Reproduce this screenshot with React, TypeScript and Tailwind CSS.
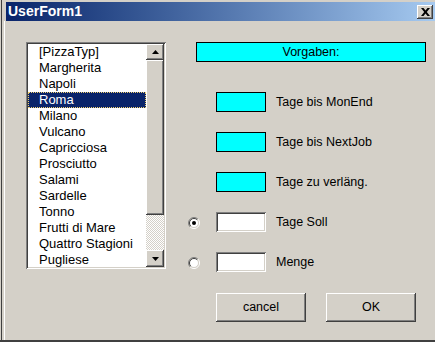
// VBA-style UserForm dialog (Win2000 look)

const pizzas = [
  '[PizzaTyp]',
  'Margherita',
  'Napoli',
  'Roma',
  'Milano',
  'Vulcano',
  'Capricciosa',
  'Prosciutto',
  'Salami',
  'Sardelle',
  'Tonno',
  'Frutti di Mare',
  'Quattro Stagioni',
  'Pugliese',
];

const raised =
  'bg-[#d4d0c8] shadow-[inset_-1px_-1px_0_#404040,inset_1px_1px_0_#ffffff,inset_-2px_-2px_0_#808080]';
const sunken =
  'shadow-[inset_1px_1px_0_#808080,inset_-1px_-1px_0_#ffffff,inset_2px_2px_0_#404040,inset_-2px_-2px_0_#d4d0c8]';

function Arrow({ down = false }: { down?: boolean }) {
  return (
    <svg width="7" height="4" viewBox="0 0 7 4">
      <polygon points={down ? '0,0 7,0 3.5,4' : '0,4 7,4 3.5,0'} fill="#000" />
    </svg>
  );
}

function Radio({ checked }: { checked?: boolean }) {
  return (
    <svg width="12" height="12" viewBox="0 0 12 12">
      <circle cx="6" cy="6" r="4.5" fill="#fff" />
      <path d="M2.1 9.9 A5.5 5.5 0 0 1 9.9 2.1" stroke="#808080" fill="none" />
      <path d="M9.9 2.1 A5.5 5.5 0 0 1 2.1 9.9" stroke="#ffffff" fill="none" />
      <path d="M2.8 9.2 A4.5 4.5 0 0 1 9.2 2.8" stroke="#404040" fill="none" />
      <path d="M9.2 2.8 A4.5 4.5 0 0 1 2.8 9.2" stroke="#d4d0c8" fill="none" />
      {checked && <circle cx="6" cy="6" r="2" fill="#000" />}
    </svg>
  );
}

function ListBox() {
  return (
    <div className={`flex h-[227px] w-[140px] bg-white p-[2px] ${sunken}`}>
      <div className="flex-1 overflow-hidden text-[13px]">
        {pizzas.map((p, i) => (
          <div
            key={p}
            className={
              i === 3
                ? 'h-[16px] border border-dotted border-[#f0d070] bg-[#0a246a] pl-[10px] leading-[14px] text-white'
                : 'h-[16px] pl-[11px] leading-[16px]'
            }
          >
            {p}
          </div>
        ))}
      </div>
      <div className="flex w-[18px] flex-col">
        <div className={`flex h-[16px] items-center justify-center ${raised}`}>
          <Arrow />
        </div>
        <div className={`h-[155px] ${raised}`} />
        <div className="flex-1 bg-[repeating-conic-gradient(#d4d0c8_0%_25%,#ffffff_0%_50%)] bg-[length:2px_2px]" />
        <div className={`flex h-[17px] items-center justify-center ${raised}`}>
          <Arrow down />
        </div>
      </div>
    </div>
  );
}

function FieldRow({
  label,
  cyan,
  radio,
}: {
  label: string;
  cyan?: boolean;
  radio?: 'on' | 'off';
}) {
  return (
    <div className="flex h-[20px] items-center">
      <div className="flex w-[28px] items-center pt-px">{radio && <Radio checked={radio === 'on'} />}</div>
      {cyan ? (
        <div className="h-[20px] w-[50px] border border-black bg-[#00ffff]" />
      ) : (
        <div className={`h-[20px] w-[50px] bg-white ${sunken}`} />
      )}
      <span className="ml-[10px]">{label}</span>
    </div>
  );
}

export default function App() {
  return (
    <div className="flex h-[342px] w-[435px] flex-col overflow-hidden bg-[#d4d0c8] font-['Liberation_Sans',Arial,sans-serif] text-[12.5px] text-black">
      <div className="flex flex-1">
        {/* window frame */}
        <div className="w-px" />
        <div className="w-px bg-[#404040]" />
        <div className="w-[2px]" />

        <div className="flex flex-1 flex-col">
          <div className="h-[2px]" />
          <div className="ml-[2px] flex h-[19px] items-center justify-between bg-linear-to-r from-[#0a246a] to-[#a6caf0]">
            <span className="pl-[2px] text-[14px] font-bold text-white">UserForm1</span>
            <div className={`mr-[2px] flex h-[14px] w-[16px] items-center justify-center ${raised}`}>
              <svg width="9" height="8" viewBox="0 0 9 8">
                <path d="M0 0h2.5l2 2.6L6.5 0H9L5.8 4 9 8H6.5l-2-2.6L2.5 8H0l3.2-4z" fill="#000" />
              </svg>
            </div>
          </div>

          <div className="flex flex-1 items-start border-l border-white pl-[21px] pt-[21px]">
            <ListBox />

            <div className="ml-[22px] flex flex-col">
              <div className="ml-[8px] flex h-[20px] w-[230px] items-center justify-center border border-black bg-[#00ffff]">
                Vorgaben:
              </div>

              <div className="mt-[30px] flex flex-col gap-[20px]">
                <FieldRow label="Tage bis MonEnd" cyan />
                <FieldRow label="Tage bis NextJob" cyan />
                <FieldRow label="Tage zu verläng." cyan />
                <FieldRow label="Tage Soll" radio="on" />
                <FieldRow label="Menge" radio="off" />
              </div>

              <div className="ml-[28px] mt-[21px] flex gap-[20px]">
                <button className={`h-[29px] w-[90px] ${raised}`}>cancel</button>
                <button className={`h-[29px] w-[90px] ${raised}`}>OK</button>
              </div>
            </div>
          </div>
        </div>
      </div>
      <div className="h-[2px] bg-[#404040]" />
    </div>
  );
}
